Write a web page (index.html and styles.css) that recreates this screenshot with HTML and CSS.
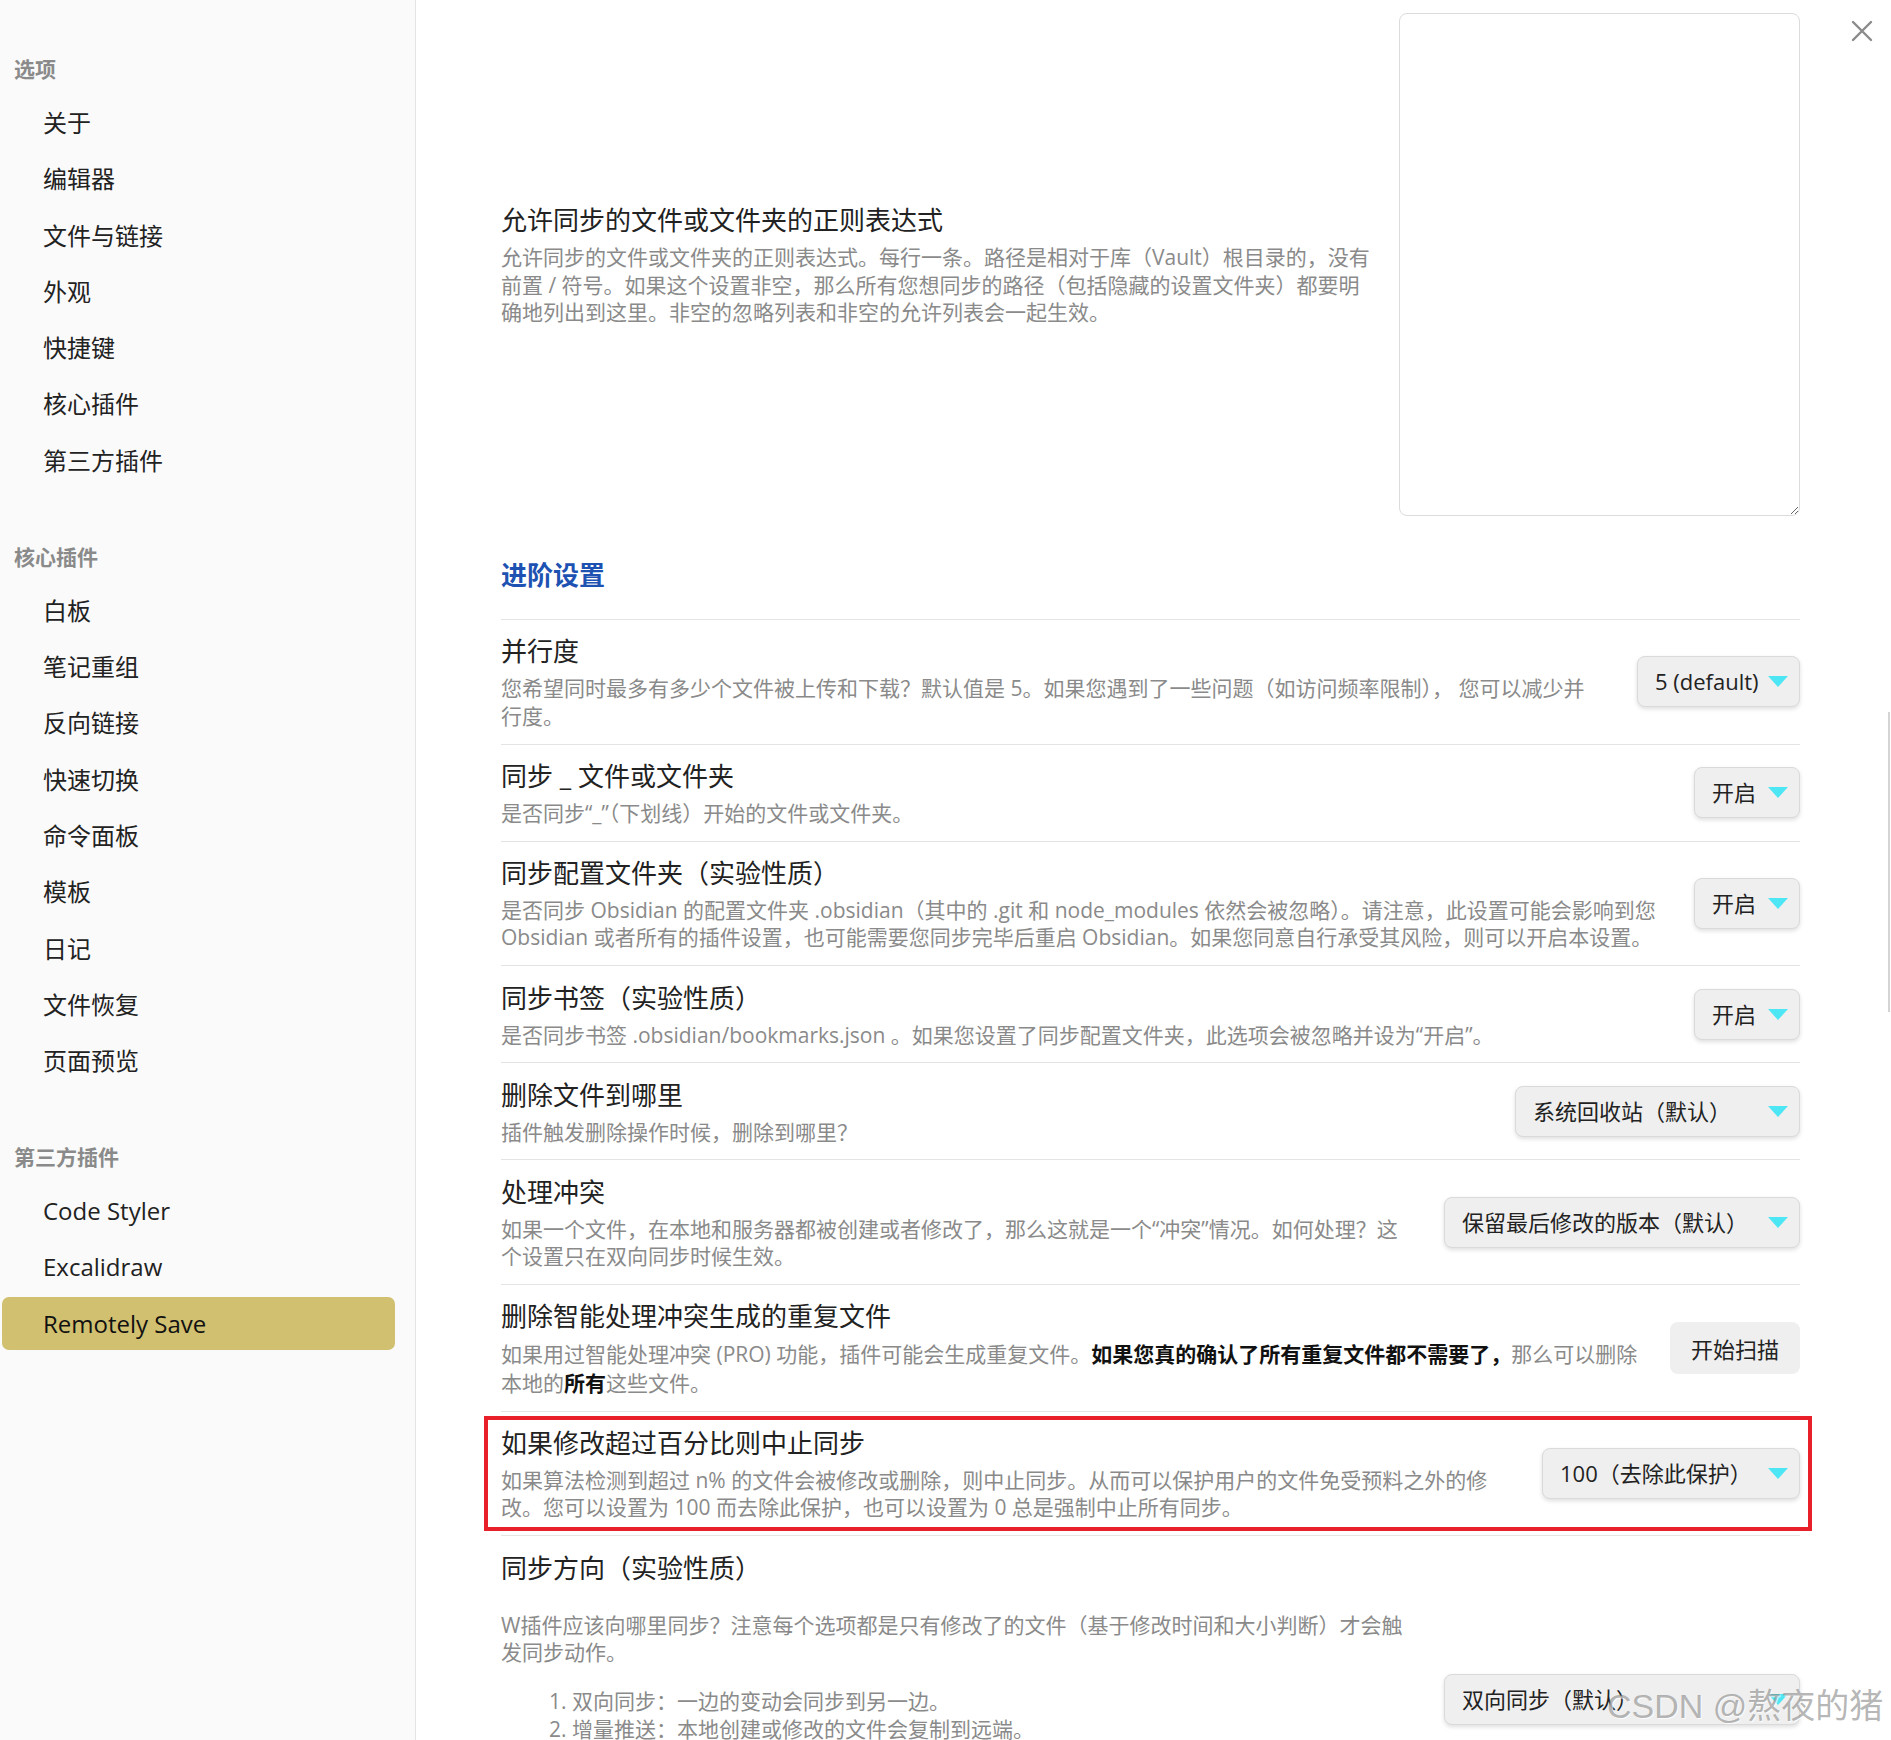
FILE: index.html
```html
<!DOCTYPE html>
<html lang="zh-CN">
<head>
  <meta charset="UTF-8" />
  <meta name="viewport" content="width=device-width, initial-scale=1.0"/>
  <title>设置 | Remotely Save</title>
  <link rel="stylesheet" href="styles.css">
</head>
<body>

  <div class="modal">
    <nav class="sidebar">
      <div class="nav-group">
        <div class="nav-title">选项</div>
        <div class="nav-item">关于</div>
        <div class="nav-item">编辑器</div>
        <div class="nav-item">文件与链接</div>
        <div class="nav-item">外观</div>
        <div class="nav-item">快捷键</div>
        <div class="nav-item">核心插件</div>
        <div class="nav-item">第三方插件</div>
      </div>
      <div class="nav-group">
        <div class="nav-title">核心插件</div>
        <div class="nav-item">白板</div>
        <div class="nav-item">笔记重组</div>
        <div class="nav-item">反向链接</div>
        <div class="nav-item">快速切换</div>
        <div class="nav-item">命令面板</div>
        <div class="nav-item">模板</div>
        <div class="nav-item">日记</div>
        <div class="nav-item">文件恢复</div>
        <div class="nav-item">页面预览</div>
      </div>
      <div class="nav-group">
        <div class="nav-title">第三方插件</div>
        <div class="nav-item">Code Styler</div>
        <div class="nav-item">Excalidraw</div>
        <div class="nav-item active">Remotely Save</div>
      </div>
    </nav>

    <main class="content">
      <div class="setting setting-top">
        <div class="setting-info">
          <div class="setting-name">允许同步的文件或文件夹的正则表达式</div>
          <div class="setting-desc">允许同步的文件或文件夹的正则表达式。每行一条。路径是相对于库（Vault）根目录的，没有前置 / 符号。如果这个设置非空，那么所有您想同步的路径（包括隐藏的设置文件夹）都要明确地列出到这里。非空的忽略列表和非空的允许列表会一起生效。</div>
        </div>
        <div class="setting-control">
          <textarea class="regex-box" spellcheck="false"></textarea>
        </div>
      </div>

      <h3 class="section-title">进阶设置</h3>

      <div class="setting">
        <div class="setting-info info-tight">
          <div class="setting-name">并行度</div>
          <div class="setting-desc">您希望同时最多有多少个文件被上传和下载？默认值是 5。如果您遇到了一些问题（如访问频率限制）， 您可以减少并行度。</div>
        </div>
        <div class="setting-control">
          <div class="dropdown dd-concurrency">5 (default)</div>
        </div>
      </div>

      <div class="setting">
        <div class="setting-info">
          <div class="setting-name">同步 _ 文件或文件夹</div>
          <div class="setting-desc">是否同步“_”（下划线）开始的文件或文件夹。</div>
        </div>
        <div class="setting-control">
          <div class="dropdown dd-toggle">开启</div>
        </div>
      </div>

      <div class="setting">
        <div class="setting-info">
          <div class="setting-name">同步配置文件夹（实验性质）</div>
          <div class="setting-desc">是否同步 Obsidian 的配置文件夹 .obsidian（其中的 .git 和 node_modules 依然会被忽略）。请注意，此设置可能会影响到您 Obsidian 或者所有的插件设置，也可能需要您同步完毕后重启 Obsidian。如果您同意自行承受其风险，则可以开启本设置。</div>
        </div>
        <div class="setting-control">
          <div class="dropdown dd-toggle">开启</div>
        </div>
      </div>

      <div class="setting">
        <div class="setting-info">
          <div class="setting-name">同步书签（实验性质）</div>
          <div class="setting-desc">是否同步书签 .obsidian/bookmarks.json 。如果您设置了同步配置文件夹，此选项会被忽略并设为“开启”。</div>
        </div>
        <div class="setting-control">
          <div class="dropdown dd-toggle">开启</div>
        </div>
      </div>

      <div class="setting">
        <div class="setting-info">
          <div class="setting-name">删除文件到哪里</div>
          <div class="setting-desc">插件触发删除操作时候，删除到哪里？</div>
        </div>
        <div class="setting-control">
          <div class="dropdown dd-trash">系统回收站（默认）</div>
        </div>
      </div>

      <div class="setting">
        <div class="setting-info">
          <div class="setting-name">处理冲突</div>
          <div class="setting-desc">如果一个文件，在本地和服务器都被创建或者修改了，那么这就是一个“冲突”情况。如何处理？这个设置只在双向同步时候生效。</div>
        </div>
        <div class="setting-control">
          <div class="dropdown dd-wide">保留最后修改的版本（默认）</div>
        </div>
      </div>

      <div class="setting">
        <div class="setting-info">
          <div class="setting-name">删除智能处理冲突生成的重复文件</div>
          <div class="setting-desc desc-rich">如果用过智能处理冲突 (PRO) 功能，插件可能会生成重复文件。<b>如果您真的确认了所有重复文件都不需要了，</b>那么可以删除本地的<b>所有</b>这些文件。</div>
        </div>
        <div class="setting-control">
          <button class="btn">开始扫描</button>
        </div>
      </div>

      <div class="setting marked">
        <div class="setting-info">
          <div class="setting-name">如果修改超过百分比则中止同步</div>
          <div class="setting-desc">如果算法检测到超过 n% 的文件会被修改或删除，则中止同步。从而可以保护用户的文件免受预料之外的修改。您可以设置为 100 而去除此保护，也可以设置为 0 总是强制中止所有同步。</div>
        </div>
        <div class="setting-control">
          <div class="dropdown dd-protect">100（去除此保护）</div>
        </div>
      </div>

      <div class="setting">
        <div class="setting-info">
          <div class="setting-name">同步方向（实验性质）</div>
          <div class="setting-desc desc-spaced">
            <p>W插件应该向哪里同步？注意每个选项都是只有修改了的文件（基于修改时间和大小判断）才会触发同步动作。</p>
            <ol>
              <li>双向同步：一边的变动会同步到另一边。</li>
              <li>增量推送：本地创建或修改的文件会复制到远端。</li>
              <li>增量拉取：远端创建或修改的文件会复制到本地。</li>
            </ol>
            <p class="desc-note">增量模式下，删除操作不会被同步到另一边。</p>
          </div>
        </div>
        <div class="setting-control">
          <div class="dropdown dd-wide">双向同步（默认）</div>
        </div>
      </div>
    </main>

    <div class="close-btn">
      <svg width="22" height="22" viewBox="0 0 22 22">
        <path d="M2 2 L20 20 M20 2 L2 20" stroke="#8a8a8a" stroke-width="2.4" stroke-linecap="round" fill="none"/>
      </svg>
    </div>
    <div class="scroll-thumb"></div>
    <div class="watermark">CSDN @熬夜的猪</div>
  </div>

</body>
</html>
```

FILE: styles.css
```css
html, body {
  margin: 0;
  padding: 0;
  height: 100%;
  background: #ffffff;
  font-family: "Open Sans", "Noto Sans CJK SC", sans-serif;
  color: #222;
  overflow: hidden;
}

.modal {
  position: relative;
  display: flex;
  height: 1740px;
  overflow: hidden;
}

/* левая навигация */
.sidebar {
  width: 416px;
  flex: none;
  box-sizing: border-box;
  background: #fafafa;
  border-right: 1px solid #e4e4e4;
  padding: 54px 20px 0 2px;
}

.nav-group {
  margin-bottom: 55px;
}

.nav-title {
  font-size: 21px;
  line-height: 30px;
  font-weight: 600;
  color: #8a8a8a;
  padding-left: 12px;
  margin-bottom: 12px;
}

.nav-item {
  height: 53px;
  line-height: 53px;
  font-size: 24px;
  padding-left: 41px;
  margin-bottom: 3.3px;
  border-radius: 7px;
  color: #222;
}

.nav-item.active {
  background-color: #d1c070;
  color: #111;
}

/* основная часть */
.content {
  flex: 1;
  min-width: 0;
  padding: 13px 91px 0 85px;
}

.setting {
  display: flex;
  align-items: center;
  border-top: 1px solid #e4e4e4;
  padding: 13.3px 0;
  position: relative;
}

.setting-top {
  border-top: none;
  padding: 0;
}

.setting-info {
  flex: 1 1 auto;
  min-width: 0;
  margin-right: 30px;
}

.setting-top .setting-info {
  margin-right: 23px;
}

.setting-info.info-tight {
  margin-right: 44px;
}

.setting-control {
  flex: none;
  display: flex;
  justify-content: flex-end;
}

.setting-name {
  font-size: 26px;
  line-height: 36px;
  color: #222;
}

.setting-desc {
  font-size: 21px;
  line-height: 27.5px;
  color: #8a8a8a;
  margin-top: 6px;
}

.setting-desc b {
  color: #111;
  font-weight: bold;
}

.desc-rich {
  line-height: 28.5px;
}

.desc-spaced {
  margin-top: 26px;
}

.desc-spaced p {
  margin: 0;
}

.desc-spaced ol {
  margin: 20px 0 0;
  padding-left: 71px;
  line-height: 28px;
}

.desc-spaced .desc-note {
  margin-top: 52px;
}

.regex-box {
  width: 401px;
  height: 503px;
  box-sizing: border-box;
  border: 1px solid #dcdcdc;
  border-radius: 8px;
  background: #fff;
  resize: both;
  font-family: inherit;
  outline: none;
}

.section-title {
  margin: 41px 0 26px;
  font-size: 26px;
  line-height: 36px;
  font-weight: bold;
  color: #1d52b2;
}

.dropdown {
  position: relative;
  box-sizing: border-box;
  height: 51px;
  line-height: 49px;
  padding: 0 44px 0 17px;
  font-size: 22px;
  color: #222;
  background: #efefef;
  border: 1px solid #dadada;
  border-radius: 8px;
  box-shadow: 0 2px 4px rgba(0, 0, 0, 0.13);
  white-space: nowrap;
}

.dropdown::after {
  content: "";
  position: absolute;
  right: 11px;
  top: 19px;
  border-left: 10px solid transparent;
  border-right: 10px solid transparent;
  border-top: 11px solid #4de6f5;
}

.dd-concurrency { width: 163px; }
.dd-toggle { width: 106px; }
.dd-trash { width: 285px; }
.dd-wide { width: 356px; }
.dd-protect { width: 258px; }

.btn {
  height: 52px;
  padding: 0 21px;
  font-family: inherit;
  font-size: 22px;
  color: #222;
  background: #efefef;
  border: none;
  border-radius: 8px;
}

/* красная рамка поверх строки */
.marked::after {
  content: "";
  position: absolute;
  top: 4px;
  bottom: 4px;
  left: -17px;
  right: -12px;
  border: 4px solid #e8202a;
  pointer-events: none;
}

.close-btn {
  position: absolute;
  top: 20px;
  right: 18px;
  width: 22px;
  height: 22px;
}

.scroll-thumb {
  position: absolute;
  right: 1px;
  top: 712px;
  width: 2px;
  height: 300px;
  background: #d4d4d4;
}

.watermark {
  position: absolute;
  left: 1607px;
  top: 1686px;
  font-family: "Liberation Sans", "Noto Sans CJK SC", sans-serif;
  font-size: 34px;
  line-height: 40px;
  color: rgba(120, 120, 120, 0.55);
  text-shadow: 1px 1px 1px rgba(255, 255, 255, 0.8);
  white-space: nowrap;
}
```
